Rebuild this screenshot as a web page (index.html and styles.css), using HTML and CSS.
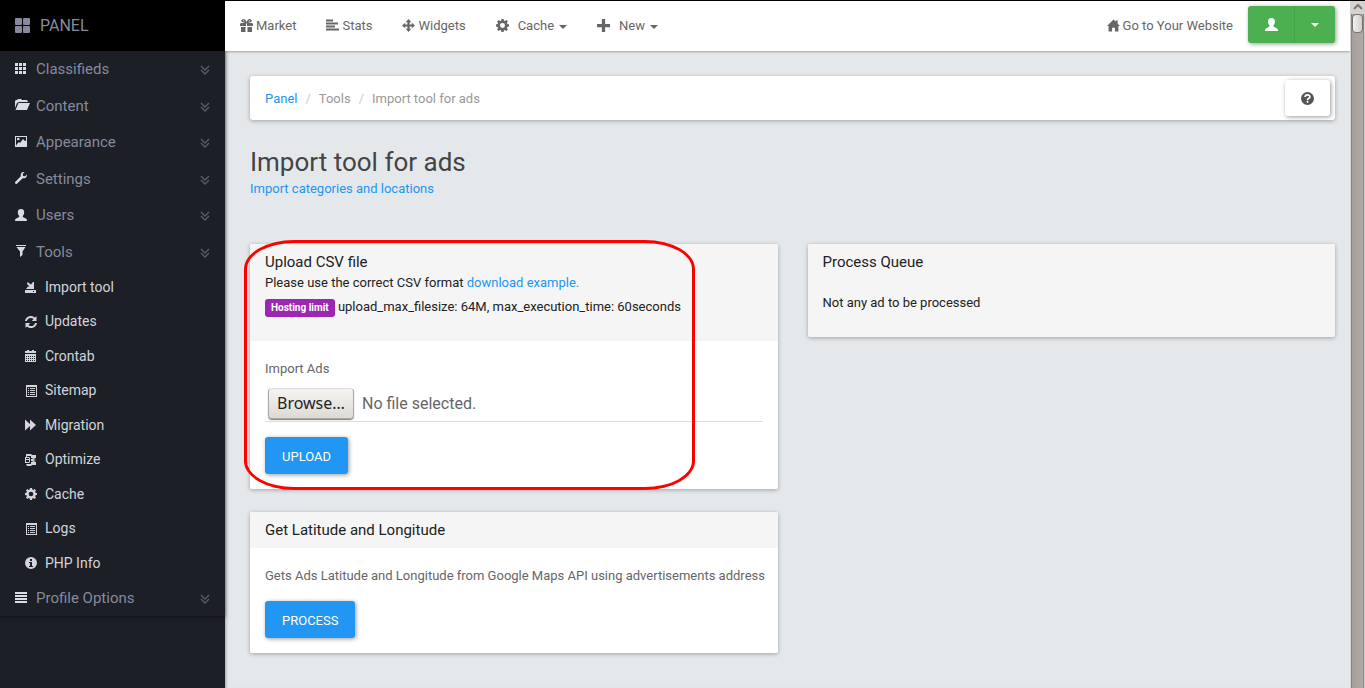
FILE: index.html
```html
<!DOCTYPE html>
<html lang="en">
<head>
<meta charset="utf-8">
<title>Import tool for ads</title>
<link rel="stylesheet" href="styles.css">
</head>
<body>
<svg class="sprite" aria-hidden="true">
  <symbol id="i-large" viewBox="0 0 15 15"><path d="M1 0h5q1 0 1 1v5q0 1-1 1H1q-1 0-1-1V1q0-1 1-1zM9 0h5q1 0 1 1v5q0 1-1 1H9q-1 0-1-1V1q0-1 1-1zM1 8h5q1 0 1 1v5q0 1-1 1H1q-1 0-1-1V9q0-1 1-1zM9 8h5q1 0 1 1v5q0 1-1 1H9q-1 0-1-1V9q0-1 1-1z"/></symbol>
  <symbol id="i-grid" viewBox="0 0 12 12"><path d="M0 0h3v3H0zM4 0h3v3H4zM8 0h3v3H8zM0 4h3v3H0zM4 4h3v3H4zM8 4h3v3H8zM0 8h3v3H0zM4 8h3v3H4zM8 8h3v3H8z"/></symbol>
  <symbol id="i-folder" viewBox="0 0 15 12"><path d="M0 9V2l1-1h1l1-1h3l1 1h5l1 2H4L2 4zM3.500 4H15l-3 7H.5z"/></symbol>
  <symbol id="i-picture" viewBox="0 0 12 12"><path fill-rule="evenodd" d="M0 0h12v11H0zM1 1v9l1-2 2-2 1 1 3-4 2 2h1V1zM2 3a1.300 1.300 0 1 1 2.600 0a1.300 1.300 0 1 1-2.600 0z"/></symbol>
  <symbol id="i-wrench" viewBox="0 0 12 12"><path d="M11.800 2.500L10 4.300 8.100 3.900 7.700 2 9.500.2C7.500-.5 5.600.9 5.700 3.200L5.800 4.300.4 9.700a1.200 1.200 0 0 0 1.800 1.900L7.700 6.200C10.300 6.900 12.300 4.800 11.800 2.500z"/></symbol>
  <symbol id="i-user" viewBox="0 0 12 12"><path d="M6 0c2 0 3.200 1.200 3.200 3.200 0 1.800-.7 2.800-1.400 3.700v1l3 1.500c.9.400 1.100 1.100 1.200 2.600H0c.1-1.500.3-2.200 1.200-2.600l3-1.500v-1C3.500 6 2.800 5 2.800 3.200 2.800 1.200 4 0 6 0z"/></symbol>
  <symbol id="i-filter" viewBox="0 0 12 12"><path d="M1 0h10v1H1zM1.500 2h9L7.500 6.500V10L5 12V6.500z"/></symbol>
  <symbol id="i-import" viewBox="0 0 12 12"><path fill-rule="evenodd" d="M0 9h11v3H0zM8 10v1h1v-1zM1 8l2-2.500h1.500L2 3l.5-2L6 3.500 8 1h1v7z"/></symbol>
  <symbol id="i-refresh" viewBox="0 0 12 12"><path d="M0 5C.4 2.200 2.800 0 5.800 0c1.600 0 3 .6 4.100 1.600L11.500.3V5H6.800l1.700-1.900C6.500 1 2.800 1.700 1.900 5zM12 7c-.4 2.800-2.800 5-5.800 5-1.600 0-3-.6-4.100-1.600L.5 11.700V7h4.700L3.500 8.900C5.500 11 9.200 10.300 10.100 7z"/></symbol>
  <symbol id="i-calendar" viewBox="0 0 12 12"><path fill-rule="evenodd" d="M0 1h2V0h2v1h3V0h2v1h2v2H0zM0 4h11v8H0zM1 6v1h1V6zM3 6v1h1V6zM5 6v1h1V6zM7 6v1h1V6zM9 6v1h1V6zM1 8v1h1V8zM3 8v1h1V8zM5 8v1h1V8zM7 8v1h1V8zM9 8v1h1V8zM1 10v1h1v-1zM3 10v1h1v-1zM5 10v1h1v-1zM7 10v1h1v-1zM9 10v1h1v-1z"/></symbol>
  <symbol id="i-list" viewBox="0 0 12 12"><path fill-rule="evenodd" d="M1 0h11v12H1zM2 2v9h9V2zM3 3h1v1H3zM5 3h5v1H5zM3 5h1v1H3zM5 5h5v1H5zM3 7h1v1H3zM5 7h5v1H5zM3 9h1v1H3zM5 9h5v1H5z"/></symbol>
  <symbol id="i-forward" viewBox="0 0 12 12"><path d="M0 .5L5 5V.5L11 6l-6 5.500V7l-5 4.500z"/></symbol>
  <symbol id="i-optimize" viewBox="0 0 12 12"><path fill-rule="evenodd" d="M1 0h5l1 1h4v3L8 5 7 4H6V2H2v1H1zM0 3h4l1 1v4L4 9H0zM1 4v1h3V4zM1 6v2h3V6zM1 10h5V8h1l1-1 3 1v3H7l-1 1H2zM6 5h2l3 1-3 1H6z"/></symbol>
  <symbol id="i-cog" viewBox="0 0 12 12"><path fill-rule="evenodd" d="M5 0h2l.3 1.500 1 .4L9.600 1 11 2.400l-.9 1.300.4 1L12 5v2l-1.500.3-.4 1 .9 1.300L9.600 11l-1.300-.9-1 .4L7 12H5l-.3-1.500-1-.4-1.300.9L1 9.600l.9-1.300-.4-1L0 7V5l1.500-.3.4-1L1 2.400 2.400 1l1.300.9 1-.4zM6 3.700a2.300 2.300 0 1 0 0 4.600 2.300 2.300 0 0 0 0-4.600z"/></symbol>
  <symbol id="i-info" viewBox="0 0 12 12"><path fill-rule="evenodd" d="M6 0a6 6 0 1 0 0 12A6 6 0 0 0 6 0zM5 2h2v2H5zM4 5h3v4h1v1H4V9h1V6H4z"/></symbol>
  <symbol id="i-lines" viewBox="0 0 12 12"><path d="M0 0h12v2H0zM0 3h12v2H0zM0 6h12v2H0zM0 9h12v2H0z"/></symbol>
  <symbol id="i-down" viewBox="0 0 10 10"><path fill="none" stroke="currentColor" stroke-width="1.300" d="M1 1l4 4 4-4M1 5l4 4 4-4"/></symbol>
  <symbol id="i-gift" viewBox="0 0 13 13"><path fill-rule="evenodd" d="M1 4h4L2 3 1 1.500 3 0l2 .5L6.500 3 8 .5 10 0l2 1.500L11 3 8 4h4l1 1v2H7V4.500H6V7H0V5zM3 1v1l2 1zM10 1L8 3l2-1zM1 8h4.500v5H1zM7.500 8H12v5H7.500z"/></symbol>
  <symbol id="i-stats" viewBox="0 0 13 12"><path d="M0 0h7v2H0zM0 3h12v2H0zM0 6h9v2H0zM0 9h13v2H0z"/></symbol>
  <symbol id="i-move" viewBox="0 0 12 12"><path d="M6 0l2.600 3H7v2h2V3.400L12 6 9 8.600V7H7v2h1.600L6 12 3.400 9H5V7H3v1.600L0 6l3-2.600V5h2V3H3.400z"/></symbol>
  <symbol id="i-plus" viewBox="0 0 12 12"><path d="M4.500 0h3v4.500H12v3H7.500V12h-3V7.500H0v-3h4.500z"/></symbol>
  <symbol id="i-home" viewBox="0 0 14 13"><path d="M7 0l2.500 2.500V1h2v3.500L14 7h-1.700v6H8.500V9h-3v4H1.700V7H0z"/></symbol>
  <symbol id="i-help" viewBox="0 0 12 12"><circle cx="6" cy="6" r="6"/><path fill="none" stroke="#fff" stroke-width="1.600" d="M3.800 4.700C3.800 1.900 8.300 2 8.200 4.500 8.200 6 6 5.700 6 7.500M6 8.300V10"/></symbol>
</svg>

<div class="app">
  <aside class="sidebar">
    <a class="brand" href="#"><svg><use href="#i-large"/></svg>PANEL</a>
    <ul class="menu">
      <li><a class="menu-link" href="#"><svg><use href="#i-grid"/></svg><span>Classifieds</span><svg class="more"><use href="#i-down"/></svg></a></li>
      <li><a class="menu-link" href="#"><svg class="wide"><use href="#i-folder"/></svg><span>Content</span><svg class="more"><use href="#i-down"/></svg></a></li>
      <li><a class="menu-link" href="#"><svg><use href="#i-picture"/></svg><span>Appearance</span><svg class="more"><use href="#i-down"/></svg></a></li>
      <li><a class="menu-link" href="#"><svg><use href="#i-wrench"/></svg><span>Settings</span><svg class="more"><use href="#i-down"/></svg></a></li>
      <li><a class="menu-link" href="#"><svg><use href="#i-user"/></svg><span>Users</span><svg class="more"><use href="#i-down"/></svg></a></li>
      <li><a class="menu-link" href="#"><svg><use href="#i-filter"/></svg><span>Tools</span><svg class="more"><use href="#i-down"/></svg></a>
        <ul class="submenu">
          <li><a href="#"><svg><use href="#i-import"/></svg>Import tool</a></li>
          <li><a href="#"><svg><use href="#i-refresh"/></svg>Updates</a></li>
          <li><a href="#"><svg><use href="#i-calendar"/></svg>Crontab</a></li>
          <li><a href="#"><svg><use href="#i-list"/></svg>Sitemap</a></li>
          <li><a href="#"><svg><use href="#i-forward"/></svg>Migration</a></li>
          <li><a href="#"><svg><use href="#i-optimize"/></svg>Optimize</a></li>
          <li><a href="#"><svg><use href="#i-cog"/></svg>Cache</a></li>
          <li><a href="#"><svg><use href="#i-list"/></svg>Logs</a></li>
          <li><a href="#"><svg><use href="#i-info"/></svg>PHP Info</a></li>
        </ul>
      </li>
      <li><a class="menu-link" href="#"><svg><use href="#i-lines"/></svg><span>Profile Options</span><svg class="more"><use href="#i-down"/></svg></a></li>
    </ul>
  </aside>

  <div class="page">
    <header class="topbar">
      <nav class="topnav">
        <a href="#"><svg><use href="#i-gift"/></svg>Market</a>
        <a href="#"><svg><use href="#i-stats"/></svg>Stats</a>
        <a href="#"><svg><use href="#i-move"/></svg>Widgets</a>
        <a class="spaced" href="#"><svg><use href="#i-cog"/></svg>Cache<i class="caret"></i></a>
        <a class="spaced" href="#"><svg><use href="#i-plus"/></svg>New<i class="caret"></i></a>
      </nav>
      <div class="account">
        <a href="#"><svg><use href="#i-home"/></svg>Go to Your Website</a>
        <div class="btn-group">
          <button class="user-btn" type="button" aria-label="Account"><svg><use href="#i-user"/></svg></button>
          <button class="caret-btn" type="button" aria-label="Account menu"><i class="caret"></i></button>
        </div>
      </div>
    </header>

    <main class="content">
      <div class="crumbs">
        <ol>
          <li><a href="#">Panel</a></li>
          <li>Tools</li>
          <li>Import tool for ads</li>
        </ol>
        <button class="help" type="button" aria-label="Help"><svg><use href="#i-help"/></svg></button>
      </div>

      <div class="heading">
        <h1>Import tool for ads</h1>
        <a href="#">Import categories and locations</a>
      </div>

      <div class="columns">
        <div class="column">
          <section class="card">
            <div class="card-head intro">
              <h2>Upload CSV file</h2>
              <p>Please use the correct CSV format <a href="#">download example.</a></p>
              <p class="limits"><span class="badge">Hosting limit</span> upload_max_filesize: 64M, max_execution_time: 60seconds</p>
            </div>
            <form class="card-body">
              <label for="csv">Import Ads</label>
              <label class="file" for="csv">
                <input id="csv" type="file">
                <span class="browse">Browse…</span>
                <span>No file selected.</span>
              </label>
              <button class="btn" type="button">UPLOAD</button>
            </form>
            <div class="marker"></div>
          </section>
          <section class="card">
            <div class="card-head"><h2>Get Latitude and Longitude</h2></div>
            <div class="card-body">
              <p class="note">Gets Ads Latitude and Longitude from Google Maps API using advertisements address</p>
              <button class="btn process" type="button">PROCESS</button>
            </div>
          </section>
        </div>
        <div class="column">
          <section class="card queue">
            <div class="card-head"><h2>Process Queue</h2></div>
            <p>Not any ad to be processed</p>
          </section>
        </div>
      </div>
    </main>
  </div>

  <div class="scrollbar" aria-hidden="true">
    <svg viewBox="0 0 15 13"><path d="M4 8l4-4 4 4"/></svg>
    <div class="track"><div class="thumb"></div></div>
  </div>
</div>
</body>
</html>
```

FILE: styles.css
```css
* { box-sizing: border-box; }
body {
  margin: 0;
  background: #e4e8eb;
  color: #666;
  font: 13px/23px Roboto, "Liberation Sans", sans-serif;
  overflow: hidden;
}
h1, h2, p, ul, ol { margin: 0; padding: 0; font-weight: 400; list-style: none; }
a { color: #2196f3; text-decoration: none; }
button { border: 0; padding: 0; font: inherit; cursor: pointer; }
svg { width: 12px; height: 12px; fill: currentColor; flex: none; }
.sprite { position: absolute; width: 0; height: 0; }

.app { display: flex; min-height: 100vh; }

/* Sidebar */
.sidebar { flex: 0 0 225px; background: #1c1f26; }
.brand {
  display: flex;
  align-items: center;
  gap: 10px;
  height: 51px;
  padding-left: 15px;
  background: #000;
  color: #868a9c;
  font-size: 16px;
}
.brand svg { width: 15px; height: 15px; }
.menu { box-shadow: 0 1px 4px rgba(0, 0, 0, .5); }
.menu-link {
  display: flex;
  align-items: center;
  height: 36px;
  padding: 0 15px;
  border-bottom: 1px solid #1b1d20;
  color: #868a9c;
  font-size: 15px;
}
.menu > li:nth-child(even) .menu-link { height: 37px; }
.menu-link span { padding-top: 2px; }
.menu-link svg { color: #d9dce1; margin-right: 9px; }
.menu-link .wide { width: 15px; margin-right: 6px; }
.menu-link .more { width: 10px; height: 10px; margin: 3px 0 0 auto; color: #5a5d66; }
.submenu a {
  display: flex;
  align-items: center;
  gap: 8px;
  height: 34px;
  padding-left: 25px;
  color: #d3d5da;
  font-size: 14px;
}
.submenu li:nth-child(even) a { height: 35px; }

/* Top bar */
.page { flex: 1; min-width: 0; box-shadow: inset 3px 0 3px -2px rgba(0, 0, 0, .3); }
.topbar {
  display: flex;
  justify-content: space-between;
  height: 51px;
  padding: 0 15px 3px;
  background: #fff;
  border-top: 1px solid #000;
  box-shadow: 0 1px 2px rgba(0, 0, 0, .3);
}
.topnav, .account { display: flex; align-items: center; }
.topnav { gap: 30px; }
.account { gap: 15px; }
.topbar a { display: flex; align-items: center; gap: 3px; padding-top: 2px; color: #666; }
.topbar a svg { width: 13px; height: 13px; }
.topbar .spaced { gap: 9px; }
.caret {
  border: 4px solid transparent;
  border-top-color: currentColor;
  border-bottom: 0;
}
.spaced .caret { margin: 2px 0 0 -4px; }
.btn-group {
  display: flex;
  height: 37px;
  border-radius: 3px;
  background: #4caf50;
  box-shadow: 1px 1px 4px rgba(0, 0, 0, .4);
}
.btn-group button {
  display: flex;
  align-items: center;
  justify-content: center;
  background: none;
  color: #fff;
}
.user-btn { width: 46px; }
.user-btn svg { width: 13px; height: 13px; }
.btn-group .caret-btn { width: 41px; border-left: 1px solid #45a349; }

/* Content */
.content { padding: 25px 15px 25px 25px; }
.crumbs {
  display: flex;
  align-items: center;
  justify-content: space-between;
  padding: 4px 5px 4px 15px;
  background: #fff;
  border-radius: 3px;
  box-shadow: 0 1px 4px rgba(0, 0, 0, .3);
}
.crumbs ol { display: flex; color: #999; }
.crumbs li + li::before { content: "/"; padding: 0 8px; color: #ccc; }
.help {
  display: flex;
  align-items: center;
  justify-content: center;
  width: 45px;
  height: 36px;
  border-radius: 3px;
  background: #fff;
  color: #555;
  box-shadow: 1px 1px 4px rgba(0, 0, 0, .4);
}
.help svg { width: 13px; height: 13px; }
.heading { padding: 26px 0 44px; }
.heading h1 { color: #444; font-size: 26px; line-height: 32px; }
.heading a { display: block; line-height: 22px; }

.columns { display: grid; grid-template-columns: 1fr 1fr; gap: 30px; align-items: start; }
.column { display: grid; grid-template-columns: minmax(0, 1fr); gap: 23px; min-width: 0; }
.card {
  position: relative;
  background: #fff;
  border-radius: 2px;
  box-shadow: 0 1px 4px rgba(0, 0, 0, .3);
}
.card-head { padding: 8px 15px; background: #f5f5f5; color: #212121; border-radius: 2px 2px 0 0; }
.card h2 { font-size: 15px; line-height: 20px; }
.card-head.intro { padding-bottom: 23px; }
.intro p { line-height: 22px; }
.intro .limits { padding-top: 2px; }
.badge {
  display: inline-block;
  padding: 0 6px;
  border-radius: 3px;
  background: #9c27b0;
  color: #fff;
  font-size: 10px;
  font-weight: 700;
  line-height: 18px;
}
.card-body {
  display: grid;
  grid-template-columns: minmax(0, 1fr);
  justify-items: start;
  padding: 16px 15px 15px;
}
.note { white-space: nowrap; }
.file {
  display: flex;
  align-items: center;
  justify-self: stretch;
  gap: 8px;
  margin: 8px 0 15px;
  padding: 0 0 2px 3px;
  border-bottom: 1px solid #ddd;
  font-size: 16px;
}
.file input { position: absolute; width: 1px; height: 1px; opacity: 0; }
.browse {
  padding: 0 8px;
  border: 1px solid #aaa7a4;
  border-top-color: #ddd;
  border-radius: 4px;
  background: linear-gradient(#f5f4f2, #dddad6);
  box-shadow: 0 1px 1px rgba(0, 0, 0, .5);
  color: #222;
  font-family: "Noto Sans", sans-serif;
  line-height: 29px;
}
.btn {
  height: 37px;
  padding: 1px 17px 0;
  border-radius: 3px;
  background: #2196f3;
  color: #fff;
  box-shadow: 1px 1px 4px rgba(0, 0, 0, .4);
}
.btn.process { margin-top: 14px; }
.queue { background: #f5f5f5; }
.queue p { padding: 11px 15px 23px; color: #212121; }

/* Hand-drawn highlight that surrounds the upload form */
.marker {
  position: absolute;
  top: -4px;
  bottom: -1px;
  left: -6px;
  width: 451px;
  border: 3px solid #f00;
  border-radius: 50px / 29px;
  pointer-events: none;
}

/* Scrollbar */
.scrollbar { display: flex; flex-direction: column; flex: 0 0 15px; border-top: 1px solid #000; background: #d6d2d0; }
.scrollbar svg { width: 15px; height: 13px; fill: none; stroke: #777; stroke-width: 2; }
.track {
  flex: 1;
  margin: 0 1px;
  border: solid #8a8581;
  border-width: 0 1px;
  background: linear-gradient(90deg, #a49f9b, #b3a9a7);
}
.thumb { height: 19px; border: 1px solid #77726e; border-radius: 4px; background: linear-gradient(90deg, #f2f1f0, #d2cfcc); }
```
